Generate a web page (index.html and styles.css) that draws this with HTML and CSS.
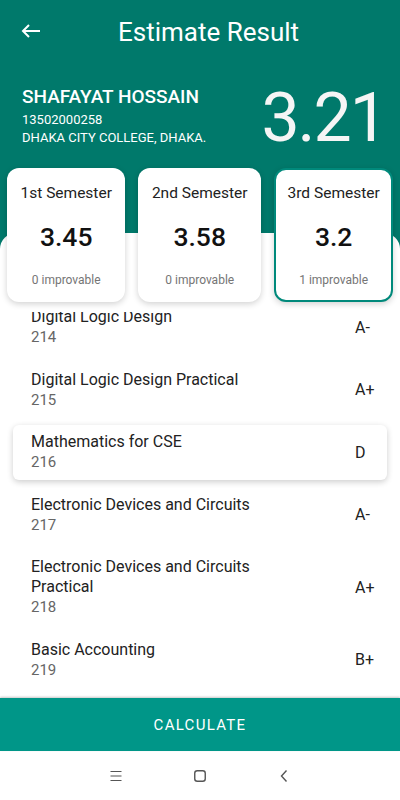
FILE: index.html
```html
<!DOCTYPE html>
<html lang="en">
<head>
  <meta charset="UTF-8" />
  <title>Estimate Result</title>
  <link rel="stylesheet" href="styles.css">
</head>
<body>

<header class="top">
  <div class="appbar">
    <svg class="back" width="20" height="14" viewBox="0 0 20 14"><path d="M19 7H2M8 1L2 7l6 6" fill="none" stroke="#fff" stroke-width="2"/></svg>
    <h1>Estimate Result</h1>
  </div>
  <div class="profile">
    <div class="student">
      <div class="name">SHAFAYAT HOSSAIN</div>
      <div class="info">13502000258</div>
      <div class="info">DHAKA CITY COLLEGE, DHAKA.</div>
    </div>
    <div class="cgpa">3.21</div>
  </div>
</header>

<main class="sheet">
  <div class="semesters">
    <div class="semester">
      <div class="sem-name">1st Semester</div>
      <div class="sem-gpa">3.45</div>
      <div class="sem-note">0 improvable</div>
    </div>
    <div class="semester">
      <div class="sem-name">2nd Semester</div>
      <div class="sem-gpa">3.58</div>
      <div class="sem-note">0 improvable</div>
    </div>
    <div class="semester active">
      <div class="sem-name">3rd Semester</div>
      <div class="sem-gpa">3.2</div>
      <div class="sem-note">1 improvable</div>
    </div>
  </div>

  <div class="list-wrap">
    <div class="courses">
      <div class="course">
        <div class="course-info">
          <div class="course-title">Digital Logic Design</div>
          <div class="course-code">214</div>
        </div>
        <div class="grade">A-</div>
      </div>
      <div class="course">
        <div class="course-info">
          <div class="course-title">Digital Logic Design Practical</div>
          <div class="course-code">215</div>
        </div>
        <div class="grade">A+</div>
      </div>
      <div class="course selected">
        <div class="course-info">
          <div class="course-title">Mathematics for CSE</div>
          <div class="course-code">216</div>
        </div>
        <div class="grade">D</div>
      </div>
      <div class="course">
        <div class="course-info">
          <div class="course-title">Electronic Devices and Circuits</div>
          <div class="course-code">217</div>
        </div>
        <div class="grade">A-</div>
      </div>
      <div class="course">
        <div class="course-info">
          <div class="course-title">Electronic Devices and Circuits Practical</div>
          <div class="course-code">218</div>
        </div>
        <div class="grade">A+</div>
      </div>
      <div class="course">
        <div class="course-info">
          <div class="course-title">Basic Accounting</div>
          <div class="course-code">219</div>
        </div>
        <div class="grade">B+</div>
      </div>
    </div>
  </div>
</main>

<button class="calculate">CALCULATE</button>

<nav class="navbar">
  <svg width="24" height="24" viewBox="0 0 24 24"><path d="M6.5 7.5h11M6.5 12h11M6.5 16.5h11" stroke="#555" stroke-width="1.2"/></svg>
  <svg width="24" height="24" viewBox="0 0 24 24"><rect x="6.75" y="6.75" width="10.5" height="10.5" rx="2.5" fill="none" stroke="#555" stroke-width="1.4"/></svg>
  <svg width="24" height="24" viewBox="0 0 24 24"><path d="M14.5 6.5L9.5 12l5 5.5" fill="none" stroke="#555" stroke-width="1.4"/></svg>
</nav>

</body>
</html>
```

FILE: styles.css
```css
body {
  font-family: Roboto, "Noto Sans", sans-serif;
  margin: 0;
  width: 400px;
  height: 800px;
  display: flex;
  flex-direction: column;
  background: #fff;
  overflow: hidden;
}
.top {
  background: #00796b;
  color: #fff;
  height: 249px;
  box-sizing: border-box;
  flex-shrink: 0;
}
.appbar {
  height: 64px;
  display: flex;
  align-items: center;
  padding-left: 21px;
}
.back {
  margin-top: -2px;
}
.appbar h1 {
  margin: 0 0 0 77px;
  font-size: 26px;
  font-weight: 400;
  line-height: 64px;
}
.profile {
  display: flex;
  justify-content: space-between;
  align-items: flex-start;
  padding: 22px 14px 0 22px;
}
.name {
  font-size: 19px;
  font-weight: 500;
  line-height: 22px;
  margin-bottom: 3px;
}
.info {
  font-size: 13px;
  line-height: 18px;
}
.cgpa {
  font-size: 68px;
  line-height: 68px;
  letter-spacing: -2px;
  margin-top: -2.5px;
  color: #f5f5f5;
}
.sheet {
  flex: 1;
  min-height: 0;
  display: flex;
  flex-direction: column;
  margin-top: -16px;
  background: #fff;
  border-radius: 16px 16px 0 0;
}
.semesters {
  display: flex;
  gap: 13px;
  padding: 0 7px;
  margin-top: -65px;
  flex-shrink: 0;
}
.semester {
  background: #fff;
  border: 2px solid transparent;
  border-radius: 12px;
  padding: 14px 11.5px 12px;
  height: 134px;
  box-sizing: border-box;
  text-align: center;
  box-shadow: 0 2px 6px rgba(0, 0, 0, 0.18);
}
.semester.active {
  border-color: #00897b;
}
.sem-name {
  font-size: 15.5px;
  line-height: 18px;
  color: #222;
  white-space: nowrap;
}
.sem-gpa {
  font-size: 26.5px;
  font-weight: 500;
  line-height: 31px;
  color: #111;
  margin-top: 18.6px;
}
.sem-note {
  font-size: 12px;
  line-height: 14px;
  color: #757575;
  margin-top: 21.4px;
}
.list-wrap {
  flex: 1;
  min-height: 0;
  overflow: hidden;
  margin-top: 9.5px;
}
.courses {
  display: flex;
  flex-direction: column;
  margin-top: -15.5px;
}
.course {
  display: flex;
  align-items: center;
  margin: 4px 13px;
  padding: 7.25px 8px 7.25px 18px;
  border-radius: 6px;
}
.course.selected {
  box-shadow: 0 2px 6px rgba(0, 0, 0, 0.2);
}
.course-info {
  flex: 1;
  margin-right: 65px;
}
.course-title {
  font-size: 16px;
  line-height: 20px;
  color: #222;
}
.course-code {
  font-size: 15px;
  line-height: 20px;
  color: #666;
}
.grade {
  width: 24px;
  font-size: 16px;
  color: #222;
}
.calculate {
  flex-shrink: 0;
  height: 53px;
  border: none;
  background: #009688;
  color: #fff;
  font-family: Roboto, sans-serif;
  font-size: 15px;
  letter-spacing: 1.3px;
  box-shadow: 0 -1px 2px rgba(0, 0, 0, 0.22);
  padding: 0;
}
.navbar {
  flex-shrink: 0;
  height: 49px;
  display: flex;
  justify-content: center;
  align-items: center;
  gap: 60px;
}
```
